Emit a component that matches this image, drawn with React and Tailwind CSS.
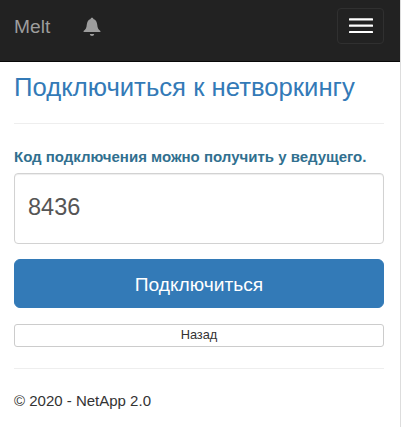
function BellIcon() {
  return (
    <svg viewBox="0 0 18 20" className="ml-[33px] mt-[17px] h-[20px] w-[18px] fill-[#9d9d9d]" aria-hidden="true">
      <path d="M9 0.8C9.9 0.8 10.3 1.2 10.4 1.9C12.8 2.7 13.9 4.8 14.2 7.5C14.5 11 15.2 12.4 17.4 14V15H0.6V14C2.8 12.4 3.5 11 3.8 7.5C4.1 4.8 5.2 2.7 7.6 1.9C7.7 1.2 8.1 0.8 9 0.8Z" />
      <path d="M6.8 17H11.2C11 18.1 10.2 19 9 19C7.8 19 7 18.1 6.8 17Z" />
    </svg>
  );
}

function Navbar() {
  return (
    <header className="flex h-[62px] items-start border-b border-[#080808] bg-[#222222] pl-[14px] pr-[16px]">
      <a className="mt-[14px] text-[19.2px] leading-[26px] text-[#9d9d9d]">Melt</a>
      <BellIcon />
      <button
        aria-label="Menu"
        className="ml-auto mt-[8px] flex h-[36px] w-[47px] items-center justify-center rounded-[4px] border border-[#303030]"
      >
        <svg viewBox="0 0 24 16" className="h-[16px] w-[24px] fill-white" aria-hidden="true">
          <rect x="0" y="0.3" width="24" height="2.3" rx="0.6" />
          <rect x="0" y="6.4" width="24" height="2.4" rx="0.6" />
          <rect x="0" y="13" width="24" height="2" rx="0.6" />
        </svg>
      </button>
    </header>
  );
}

export default function App() {
  return (
    <div className="flex h-[427px] w-[401px] border-r border-[#dddddd] bg-white font-['Liberation_Sans',Arial,sans-serif] text-[#333333]">
      <div className="flex w-[400px] flex-col">
        <Navbar />
        <main className="flex flex-col pl-[14px] pr-[16px]">
          <h1 className="mt-[10px] whitespace-nowrap text-[25.7px] leading-[30px] text-[#337ab7]">
            Подключиться к нетворкингу
          </h1>
          <hr className="mt-[21px] border-[#eeeeee]" />
          <label htmlFor="code" className="mt-[23px] whitespace-nowrap text-[15px] font-bold leading-[20px] text-[#31708f]">
            Код подключения можно получить у ведущего.
          </label>
          <input
            id="code"
            defaultValue="8436"
            className="mt-[6px] h-[71px] w-full rounded-[4px] border border-[#d2d2d2] px-[13px] pb-[2px] text-[23.5px] text-[#555555] shadow-[inset_0_1px_1px_rgba(0,0,0,0.075)]"
          />
          <button className="mt-[15px] h-[49px] rounded-[6px] border border-[#337ab7] bg-[#337ab7] pt-[2px] text-[19.2px] leading-[26px] text-white">
            Подключиться
          </button>
          <button className="mt-[16px] h-[23px] rounded-[3px] border border-[#cccccc] pb-[2px] text-[12.8px] leading-[18px]">
            Назад
          </button>
          <hr className="mt-[21px] border-[#eeeeee]" />
          <p className="mt-[21px] text-[15px] leading-[21px]">© 2020 - NetApp 2.0</p>
        </main>
      </div>
    </div>
  );
}
